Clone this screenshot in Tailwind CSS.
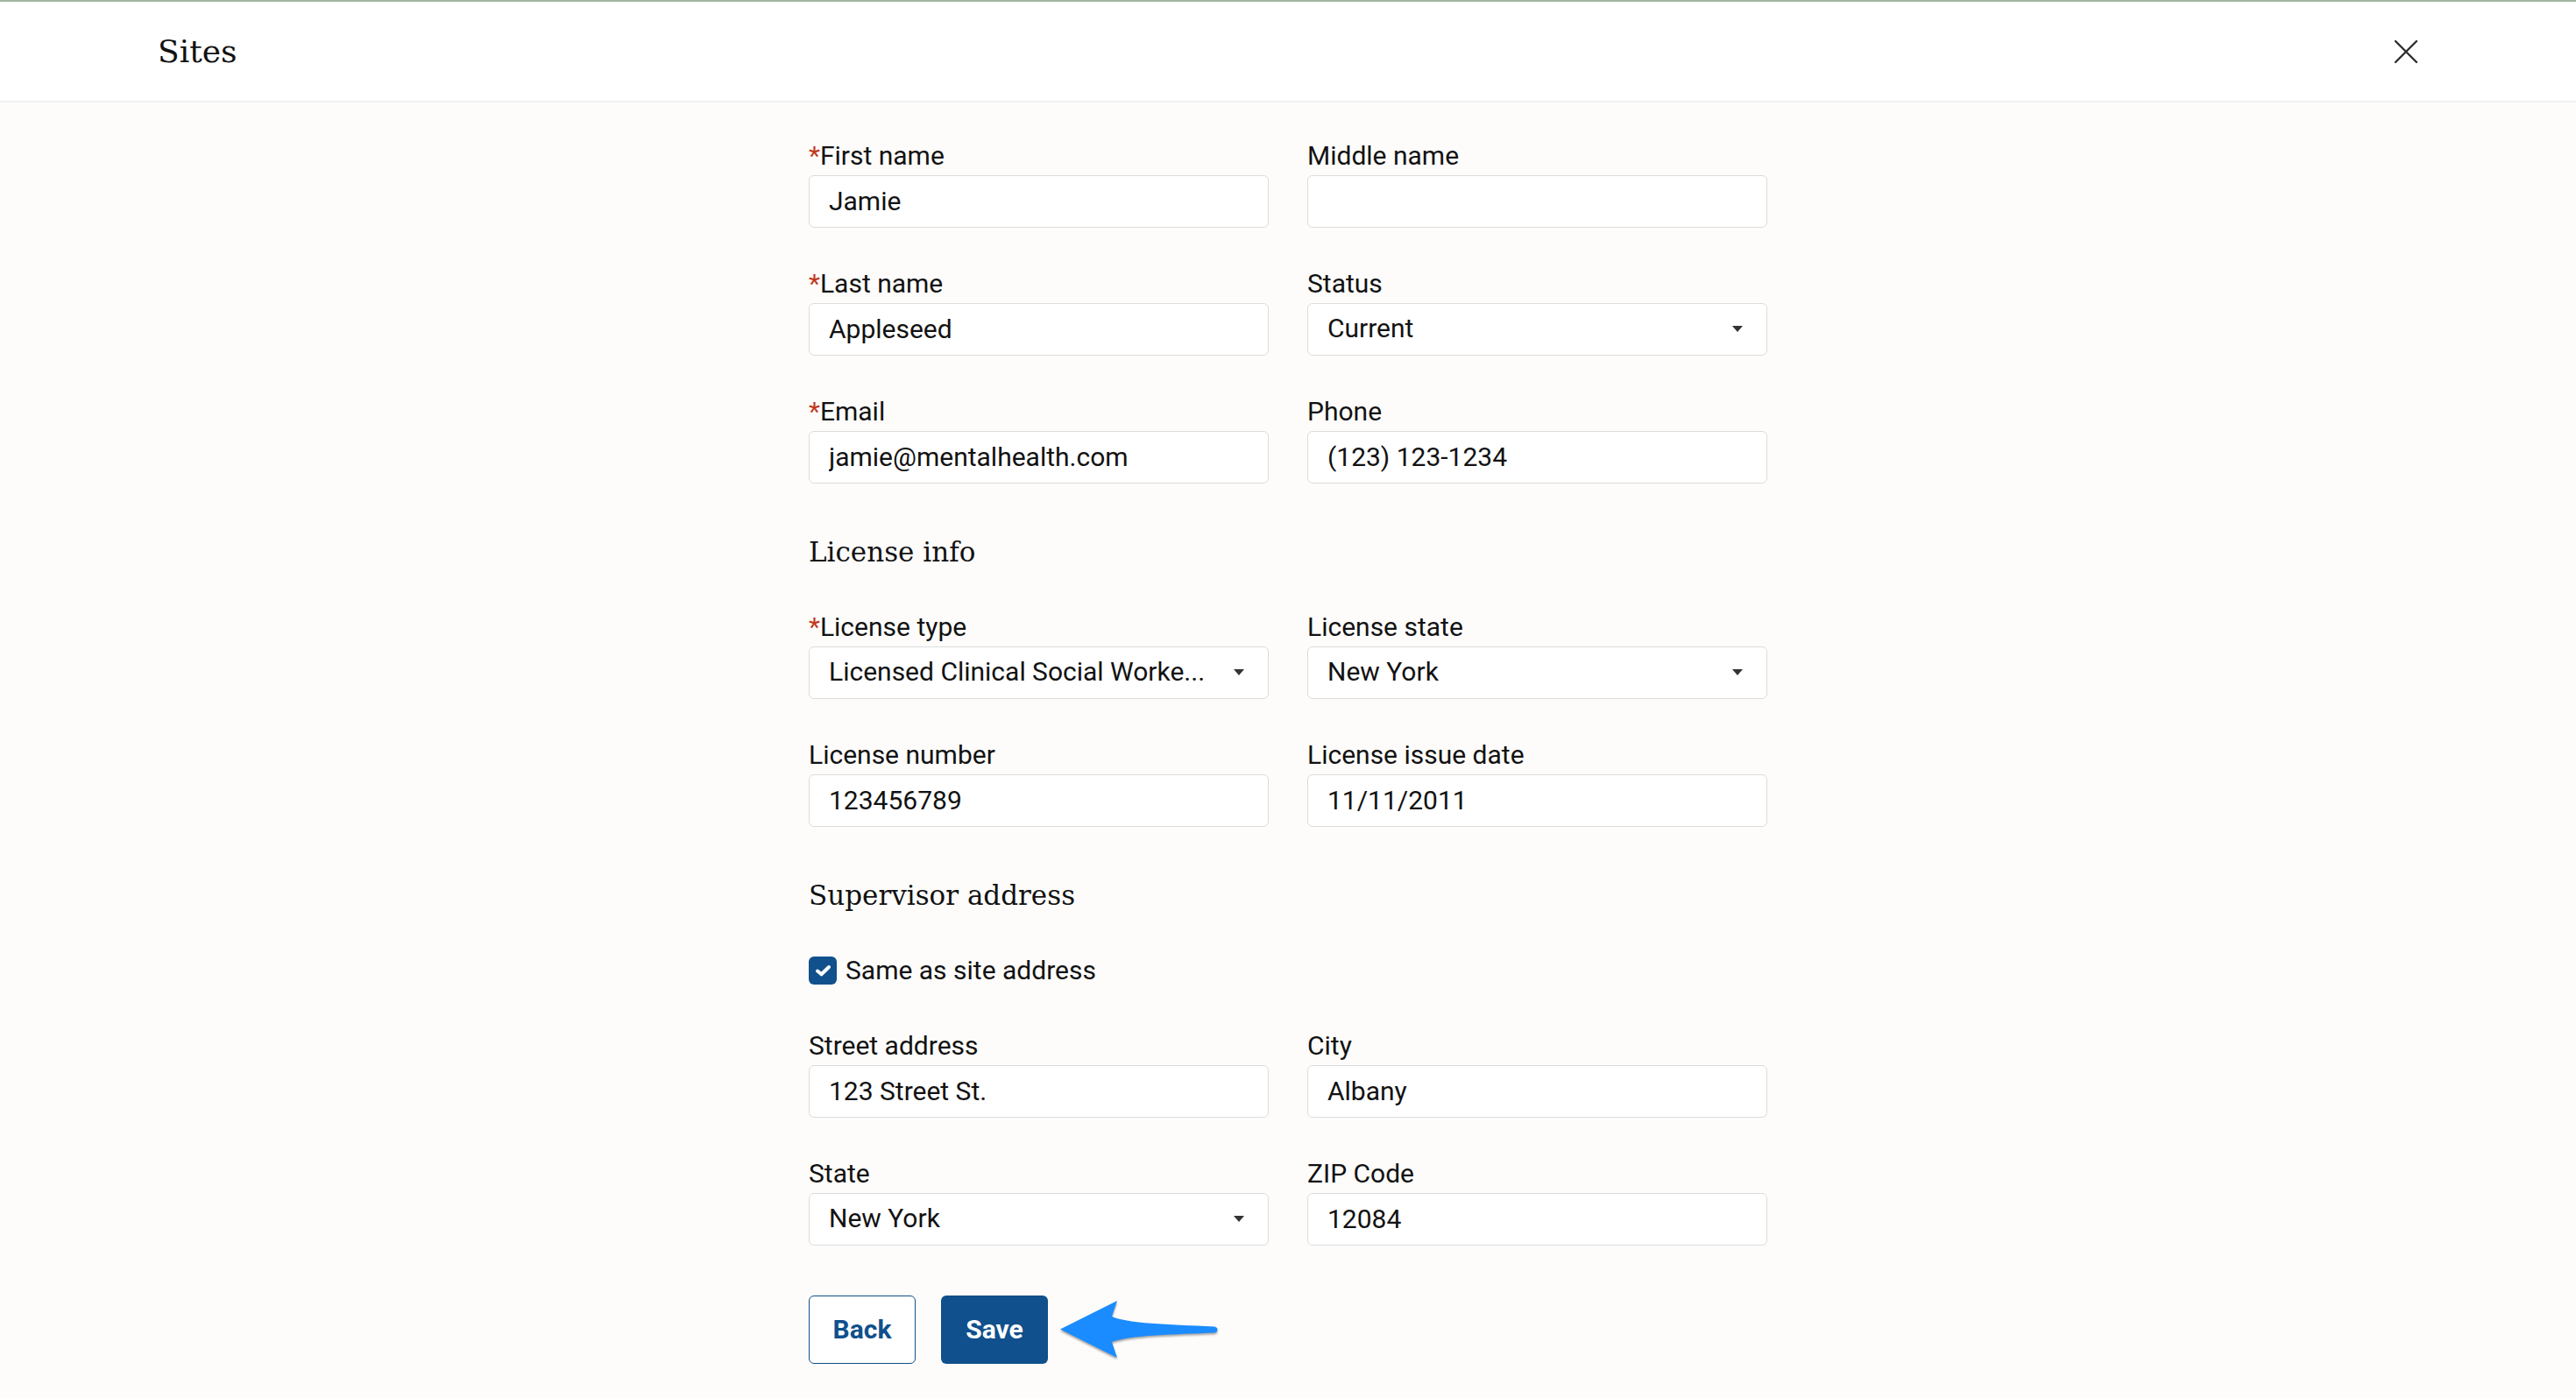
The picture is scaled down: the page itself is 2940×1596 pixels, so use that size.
<!DOCTYPE html>
<html lang="en">
  <head>
    <meta charset="UTF-8" />
    <meta name="viewport" content="width=device-width, initial-scale=1.0" />
    <title>Sites</title>
    <script src="https://cdn.jsdelivr.net/npm/@tailwindcss/browser@4"></script>
  </head>
  <body class="min-h-screen bg-[#fdfcfb] font-[Roboto,sans-serif] text-[30px] leading-[44px] text-[#121212]">
    <header class="flex items-center justify-between border-t-2 border-b-2 border-t-[#a0b59e] border-b-[#f2f2f2] bg-white px-[180px] py-8">
      <h1 class="font-['DejaVu_Serif',serif] text-[36px] leading-[49px]">Sites</h1>
      <button type="button" aria-label="Close" class="cursor-pointer">
        <svg class="size-7" viewBox="0 0 28 28" fill="none" stroke="#2e2e2e" stroke-width="2.4" stroke-linecap="round">
          <path d="M2 2l24 24M26 2L2 26" />
        </svg>
      </button>
    </header>

    <main class="mx-auto max-w-[1094px] pt-[39px] pb-6">
      <form>
        <div class="grid grid-cols-2 gap-x-11 gap-y-[42px]">
          <div class="flex flex-col">
            <label for="first-name"><span class="text-[#c2371c]">*</span>First name</label>
            <input type="text" id="first-name" value="Jamie" class="h-15 w-full rounded-md border border-[#dcdcdc] bg-white px-[22px] pb-[2px]" />
          </div>
          <div class="flex flex-col">
            <label for="middle-name">Middle name</label>
            <input type="text" id="middle-name" class="h-15 w-full rounded-md border border-[#dcdcdc] bg-white px-[22px] pb-[2px]" />
          </div>
          <div class="flex flex-col">
            <label for="last-name"><span class="text-[#c2371c]">*</span>Last name</label>
            <input type="text" id="last-name" value="Appleseed" class="h-15 w-full rounded-md border border-[#dcdcdc] bg-white px-[22px] pb-[2px]" />
          </div>
          <div class="flex flex-col">
            <label for="status">Status</label>
            <div class="relative">
              <select id="status" class="block h-15 w-full appearance-none rounded-md border border-[#dcdcdc] bg-white pr-14 pb-[2px] pl-[22px]">
                <option>Current</option>
              </select>
              <svg class="pointer-events-none absolute top-[26px] right-7 h-[7px] w-3" viewBox="0 0 12 7" fill="#333333"><path d="M0 0h12L6 7z" /></svg>
            </div>
          </div>
          <div class="flex flex-col">
            <label for="email"><span class="text-[#c2371c]">*</span>Email</label>
            <input type="email" id="email" value="jamie@mentalhealth.com" class="h-15 w-full rounded-md border border-[#dcdcdc] bg-white px-[22px] pb-[2px]" />
          </div>
          <div class="flex flex-col">
            <label for="phone">Phone</label>
            <input type="tel" id="phone" value="(123) 123-1234" class="h-15 w-full rounded-md border border-[#dcdcdc] bg-white px-[22px] pb-[2px]" />
          </div>
        </div>

        <!-- License info -->
        <h2 class="mt-[54px] mb-10 font-['DejaVu_Serif',serif] text-[31px] leading-[48px]">License info</h2>
        <div class="grid grid-cols-2 gap-x-11 gap-y-[42px]">
          <div class="flex flex-col">
            <label for="license-type"><span class="text-[#c2371c]">*</span>License type</label>
            <div class="relative">
              <select id="license-type" class="block h-15 w-full appearance-none rounded-md border border-[#dcdcdc] bg-white pr-14 pb-[2px] pl-[22px]">
                <option>Licensed Clinical Social Worke...</option>
              </select>
              <svg class="pointer-events-none absolute top-[26px] right-7 h-[7px] w-3" viewBox="0 0 12 7" fill="#333333"><path d="M0 0h12L6 7z" /></svg>
            </div>
          </div>
          <div class="flex flex-col">
            <label for="license-state">License state</label>
            <div class="relative">
              <select id="license-state" class="block h-15 w-full appearance-none rounded-md border border-[#dcdcdc] bg-white pr-14 pb-[2px] pl-[22px]">
                <option>New York</option>
              </select>
              <svg class="pointer-events-none absolute top-[26px] right-7 h-[7px] w-3" viewBox="0 0 12 7" fill="#333333"><path d="M0 0h12L6 7z" /></svg>
            </div>
          </div>
          <div class="flex flex-col">
            <label for="license-number">License number</label>
            <input type="text" id="license-number" value="123456789" class="h-15 w-full rounded-md border border-[#dcdcdc] bg-white px-[22px] pb-[2px]" />
          </div>
          <div class="flex flex-col">
            <label for="issue-date">License issue date</label>
            <input type="text" id="issue-date" value="11/11/2011" class="h-15 w-full rounded-md border border-[#dcdcdc] bg-white px-[22px] pb-[2px]" />
          </div>
        </div>

        <!-- Supervisor address -->
        <h2 class="mt-[54px] mb-10 font-['DejaVu_Serif',serif] text-[31px] leading-[48px]">Supervisor address</h2>
        <div class="mb-[42px] flex items-center gap-[10px]">
          <div class="relative size-8">
            <input type="checkbox" id="same-address" checked class="block size-8 appearance-none rounded-md bg-[#10508c]" />
            <svg class="pointer-events-none absolute inset-0 size-8" viewBox="0 0 32 32" fill="none" stroke="white" stroke-width="4" stroke-linecap="round" stroke-linejoin="round">
              <path d="M10 16.5l4.5 3.8L23 12" />
            </svg>
          </div>
          <label for="same-address">Same as site address</label>
        </div>
        <div class="grid grid-cols-2 gap-x-11 gap-y-[42px]">
          <div class="flex flex-col">
            <label for="street">Street address</label>
            <input type="text" id="street" value="123 Street St." class="h-15 w-full rounded-md border border-[#dcdcdc] bg-white px-[22px] pb-[2px]" />
          </div>
          <div class="flex flex-col">
            <label for="city">City</label>
            <input type="text" id="city" value="Albany" class="h-15 w-full rounded-md border border-[#dcdcdc] bg-white px-[22px] pb-[2px]" />
          </div>
          <div class="flex flex-col">
            <label for="state">State</label>
            <div class="relative">
              <select id="state" class="block h-15 w-full appearance-none rounded-md border border-[#dcdcdc] bg-white pr-14 pb-[2px] pl-[22px]">
                <option>New York</option>
              </select>
              <svg class="pointer-events-none absolute top-[26px] right-7 h-[7px] w-3" viewBox="0 0 12 7" fill="#333333"><path d="M0 0h12L6 7z" /></svg>
            </div>
          </div>
          <div class="flex flex-col">
            <label for="zip">ZIP Code</label>
            <input type="text" id="zip" value="12084" class="h-15 w-full rounded-md border border-[#dcdcdc] bg-white px-[22px] pb-[2px]" />
          </div>
        </div>

        <div class="mt-[57px] flex items-center">
          <button type="button" class="h-[78px] w-[122px] cursor-pointer rounded-md border border-[#10508c] bg-white font-bold text-[#10508c]">Back</button>
          <button type="submit" class="ml-[29px] h-[78px] w-[122px] cursor-pointer rounded-md bg-[#10508c] font-bold text-white">Save</button>
          <svg class="ml-[14px] h-[66px] w-[180px] overflow-visible drop-shadow-[0_2px_1px_rgba(0,0,0,0.35)]" viewBox="0 0 180 66" fill="#1a8cff">
            <path d="M0 32.5L65 0L59 18C78 26 120 27 176 29.5Q179.500 30 179.500 33Q179.500 36 176 36.500C110 39 78 40 59 47L65 65Z" />
          </svg>
        </div>
      </form>
    </main>
  </body>
</html>
